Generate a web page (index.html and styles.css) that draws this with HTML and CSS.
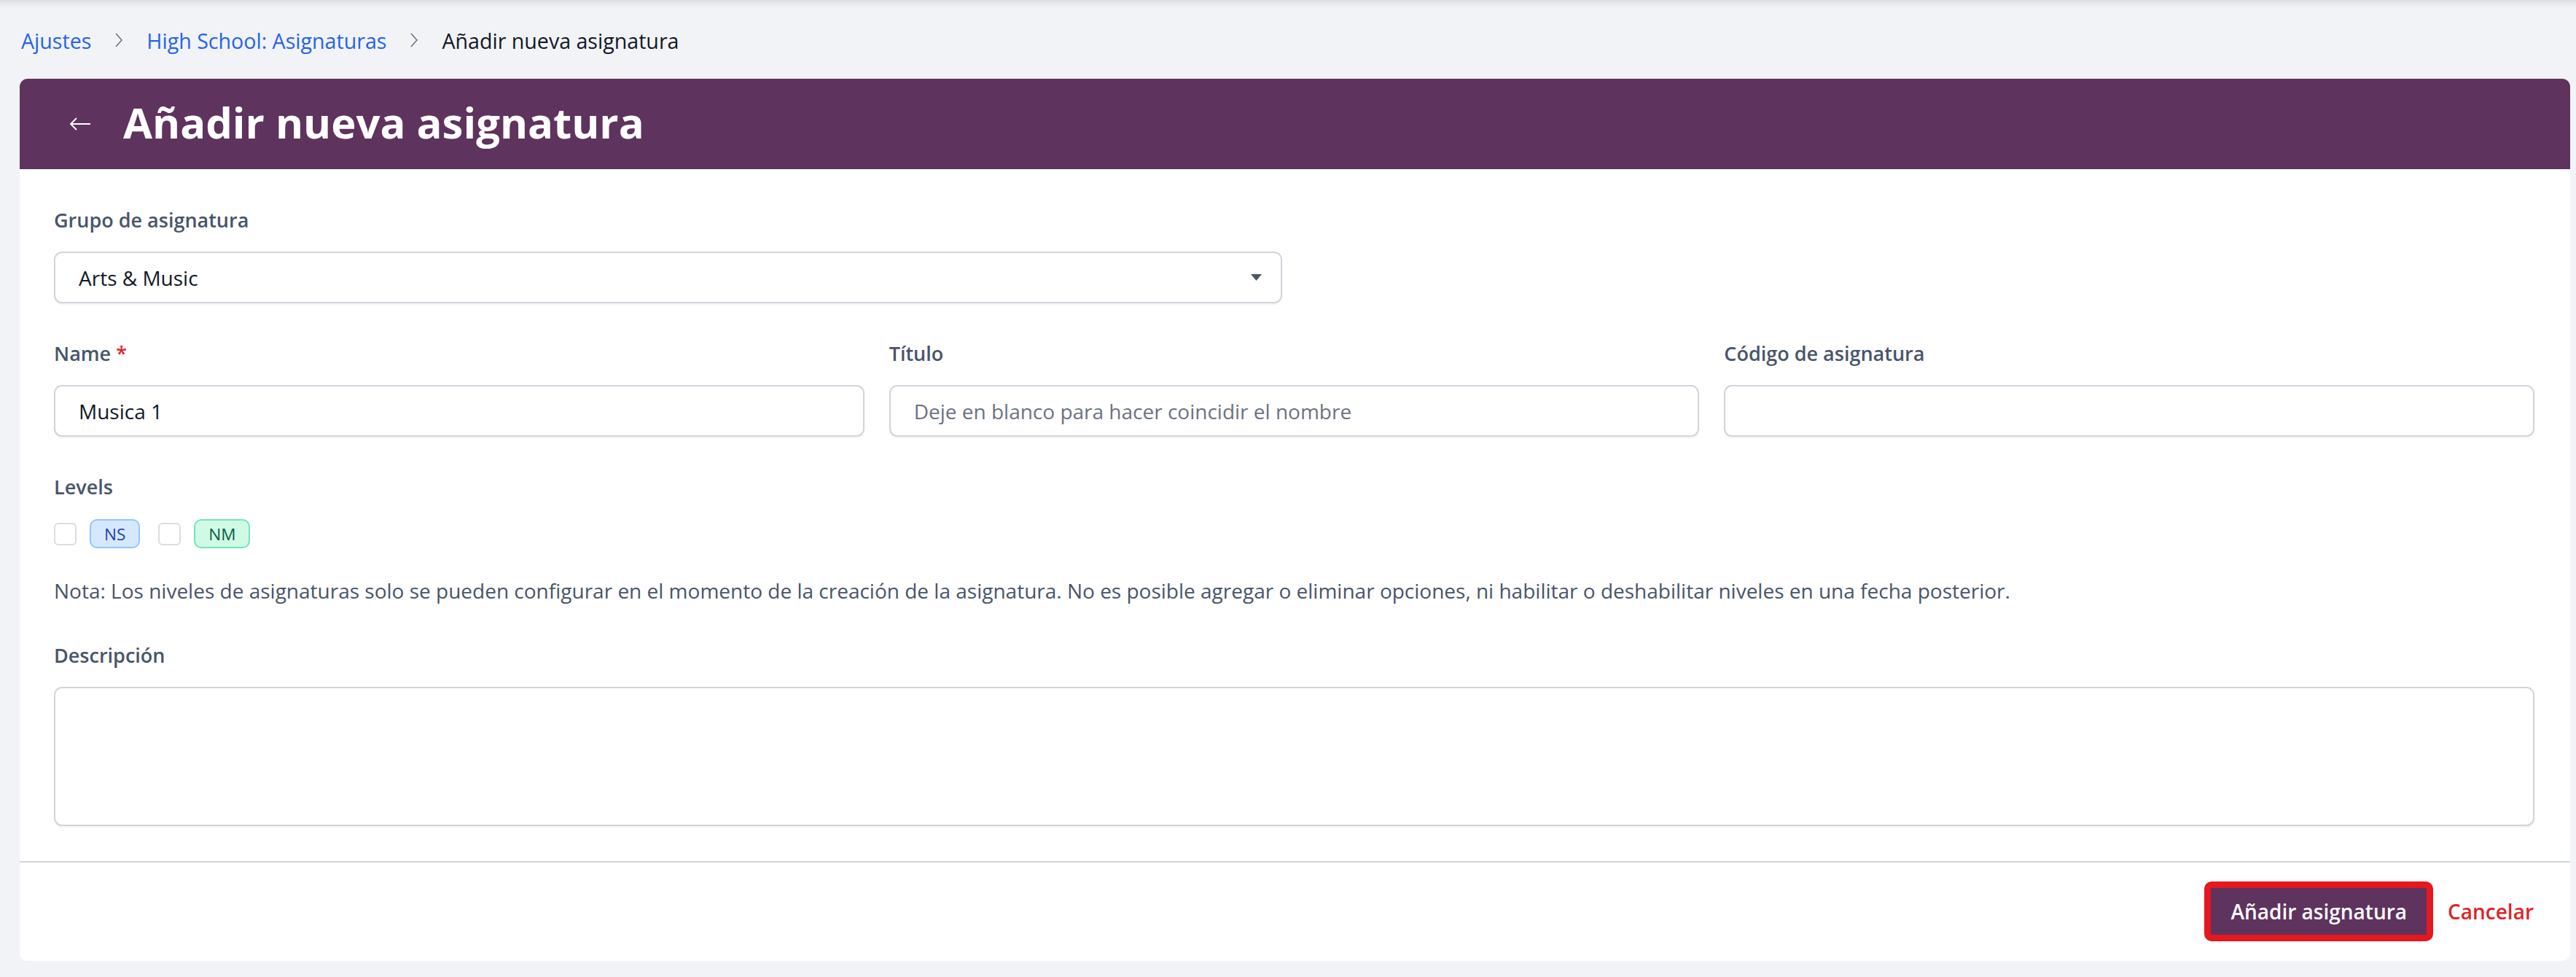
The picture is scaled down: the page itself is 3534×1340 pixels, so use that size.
FILE: index.html
```html
<!DOCTYPE html>
<html lang="es">
<head>
	<meta charset="UTF-8">
	<title>Añadir nueva asignatura</title>
	<link rel="stylesheet" href="styles.css">
</head>
<body>
	<div class="page">
		<nav class="crumbs">
			<a href="#">Ajustes</a>
			<svg class="chev" viewBox="0 0 10 20"><polyline points="1,1 9,10 1,19"/></svg>
			<a href="#">High School: Asignaturas</a>
			<svg class="chev" viewBox="0 0 10 20"><polyline points="1,1 9,10 1,19"/></svg>
			<span>Añadir nueva asignatura</span>
		</nav>

		<div class="card">
			<div class="card-head">
				<svg class="back" viewBox="0 0 30 20"><path d="M29 10H2M10 2L2 10l8 8"/></svg>
				<h1>Añadir nueva asignatura</h1>
			</div>

			<form class="card-body">
				<div class="field half">
					<label>Grupo de asignatura</label>
					<select class="control">
						<option>Arts &amp; Music</option>
					</select>
				</div>

				<div class="row">
					<div class="field">
						<label>Name <span class="req">*</span></label>
						<input class="control" type="text" value="Musica 1">
					</div>
					<div class="field">
						<label>Título</label>
						<input class="control" type="text" placeholder="Deje en blanco para hacer coincidir el nombre">
					</div>
					<div class="field">
						<label>Código de asignatura</label>
						<input class="control" type="text">
					</div>
				</div>

				<div class="field levels">
					<label>Levels</label>
					<div class="level-list">
						<input type="checkbox" class="check">
						<span class="badge ns">NS</span>
						<input type="checkbox" class="check">
						<span class="badge nm">NM</span>
					</div>
				</div>

				<p class="note">Nota: Los niveles de asignaturas solo se pueden configurar en el momento de la creación de la asignatura. No es posible agregar o eliminar opciones, ni habilitar o deshabilitar niveles en una fecha posterior.</p>

				<div class="field last">
					<label>Descripción</label>
					<textarea class="control area"></textarea>
				</div>
			</form>

			<div class="card-foot">
				<button type="button" class="btn-primary">Añadir asignatura</button>
				<a href="#" class="cancel">Cancelar</a>
			</div>
		</div>
	</div>
</body>
</html>
```

FILE: styles.css
```css
html, body {
	margin: 0;
	padding: 0;
	background: #f2f3f7;
	font-family: "Open Sans", "Noto Sans", sans-serif;
	color: #111827;
}
.page {
	min-height: 1340px;
	box-shadow: inset 0 14px 12px -12px rgba(0, 0, 0, 0.14);
	padding: 0 8px 25px 27px;
	box-sizing: border-box;
}
.crumbs {
	height: 108px;
	display: flex;
	align-items: center;
	padding: 2px 0 0 2px;
	font-size: 28.6px;
	box-sizing: border-box;
}
.crumbs a {
	color: #2563eb;
	text-decoration: none;
}
.crumbs span {
	color: #111827;
}
.chev {
	width: 10px;
	height: 20px;
	margin: 0 33px;
	fill: none;
	stroke: #6b7280;
	stroke-width: 1.6;
}
.card {
	background: #fff;
	border-radius: 11px;
	overflow: hidden;
}
.card-head {
	height: 124px;
	background: #5e335e;
	display: flex;
	align-items: center;
	padding-left: 68px;
}
.back {
	width: 30px;
	height: 20px;
	fill: none;
	stroke: #fff;
	stroke-width: 1.8;
	margin-right: 44px;
}
h1 {
	margin: 0;
	color: #fff;
	font-size: 58px;
	font-weight: 700;
	line-height: 1;
	padding-bottom: 4px;
}
.card-body {
	display: block;
	padding: 51px 49px 48px 47px;
}
.field {
	display: flex;
	flex-direction: column;
	margin-bottom: 50px;
}
.field.half {
	width: calc(50% - 17px);
}
.field.last {
	margin-bottom: 0;
}
label {
	font-size: 27px;
	line-height: 38px;
	font-weight: 600;
	color: #475569;
	margin-bottom: 24px;
}
.req {
	color: #dc2626;
}
.row {
	display: grid;
	grid-template-columns: 1fr 1fr 1fr;
	gap: 34px;
}
.control {
	height: 71px;
	box-sizing: border-box;
	border: 2px solid #d1d5db;
	border-radius: 11px;
	background: #fff;
	box-shadow: 0 2px 2px rgba(0, 0, 0, 0.05);
	font-family: inherit;
	font-size: 28px;
	color: #111827;
	padding: 0 32px;
	outline: none;
}
.control::placeholder {
	color: #6b7280;
}
select.control {
	appearance: none;
	-webkit-appearance: none;
	background: #fff url("data:image/svg+xml,%3Csvg xmlns='http://www.w3.org/2000/svg' width='15' height='9'%3E%3Cpath d='M0 0h15L7.5 9z' fill='%234b5563'/%3E%3C/svg%3E") no-repeat right 26px center;
}
.area {
	height: 191px;
	resize: none;
	padding: 20px 32px;
}
.levels {
	margin-bottom: 39px;
}
.levels label {
	margin-bottom: 25px;
}
.level-list {
	display: flex;
	align-items: center;
	height: 40px;
}
.check {
	appearance: none;
	-webkit-appearance: none;
	width: 31px;
	height: 31px;
	margin: 0 18px 0 0;
	border: 2px solid #dddddd;
	border-radius: 6px;
	background: #fff;
	box-sizing: border-box;
}
.badge {
	box-sizing: border-box;
	height: 40px;
	display: inline-flex;
	align-items: center;
	padding: 0 18px;
	border: 2px solid;
	border-radius: 10px;
	font-size: 22.5px;
	margin-right: 25px;
}
.ns {
	background: #d6e8fd;
	border-color: #93c5fd;
	color: #1e40af;
}
.nm {
	background: #d1fae5;
	border-color: #6ee7b7;
	color: #065f46;
}
.note {
	margin: 0 0 51px;
	font-size: 28px;
	line-height: 38px;
	color: #475569;
}
.card-foot {
	border-top: 2px solid #d1d5db;
	display: flex;
	justify-content: flex-end;
	align-items: center;
	padding: 26px 50px 27px 0;
}
.btn-primary {
	height: 82px;
	box-sizing: border-box;
	border: 9px solid #e5171f;
	border-radius: 10px;
	background: #5e335e;
	color: #fff;
	font-family: inherit;
	font-size: 28px;
	font-weight: 600;
	padding: 0 27px;
}
.cancel {
	margin-left: 20px;
	color: #dc2626;
	font-size: 28px;
	font-weight: 600;
	text-decoration: none;
}
```
